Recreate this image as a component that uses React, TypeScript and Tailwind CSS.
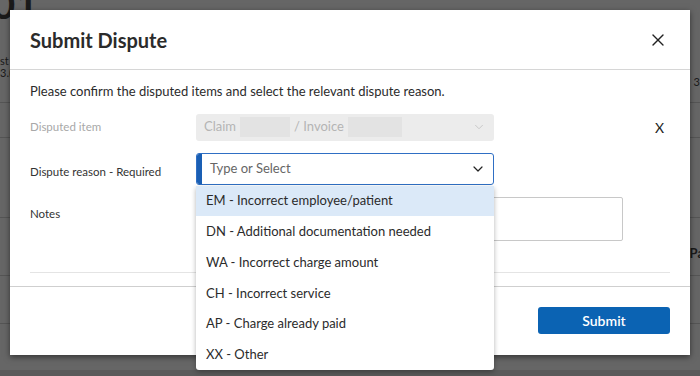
import { ChevronDown, X } from "lucide-react";

const reasons = [
  "EM - Incorrect employee/patient",
  "DN - Additional documentation needed",
  "WA - Incorrect charge amount",
  "CH - Incorrect service",
  "AP - Charge already paid",
  "XX - Other",
];

export default function App() {
  return (
    <div className="relative h-[376px] w-[700px] overflow-hidden bg-[#666666] font-['Lato',sans-serif] text-[#2b2b2b]">
      {/* page behind the overlay */}
      <div className="absolute inset-0 text-[#1a1a1a]">
        <div className="absolute left-[-8px] top-[-16px] text-[40px] font-bold leading-none">01</div>
        <div className="absolute left-0 top-[55px] text-[11px] leading-[12px]">st<br />3.(</div>
        <div className="absolute right-0 top-[74px] text-[11px]">3</div>
        <div className="absolute right-[-4px] top-[244px] text-[13px] font-bold">Pa</div>
        <div className="absolute left-0 right-0 top-[102px] h-px bg-[#555]" />
        <div className="absolute left-0 right-0 top-[137px] h-px bg-[#555]" />
        <div className="absolute left-0 right-0 top-[217px] h-px bg-[#555]" />
        <div className="absolute left-0 right-0 top-[275px] h-px bg-[#555]" />
        <div className="absolute left-0 right-0 top-[323px] h-px bg-[#555]" />
        <div className="absolute left-0 right-0 top-[370px] h-[6px] bg-[#5a5a5a]" />
      </div>

      {/* modal */}
      <div className="absolute left-[10px] top-[10px] w-[680px] bg-white shadow-[0_2px_6px_rgba(0,0,0,0.5)]">
        <div className="flex h-[60px] items-center justify-between border-b border-[#d6d6d6] pl-[20px] pr-[22px]">
          <h2 className="text-[20px] font-bold text-[#2b2b2b]">Submit Dispute</h2>
          <X className="h-[20px] w-[20px] text-[#222]" strokeWidth={1.6} />
        </div>

        <div className="px-[20px] pt-[12px]">
          <p className="text-[13px]">Please confirm the disputed items and select the relevant dispute reason.</p>

          <div className="mt-[12px] flex items-center">
            <div className="w-[166px] text-[11.5px] text-[#a8a8a8]">Disputed item</div>
            <div className="flex h-[27px] w-[298px] items-center justify-between rounded-[3px] bg-[#ececec] pl-[8px] pr-[8px] text-[13px] text-[#b4b4b4]">
              <div className="flex items-center">
                <span>Claim</span>
                <span className="mx-[4px] h-[20px] w-[50px] bg-[#e3e3e3]" />
                <span>/ Invoice</span>
                <span className="ml-[4px] h-[20px] w-[54px] bg-[#e3e3e3]" />
              </div>
              <ChevronDown className="h-[14px] w-[14px] text-[#c4c4c4]" strokeWidth={1.5} />
            </div>
            <div className="ml-auto mr-[6px] text-[14px] text-[#222]">X</div>
          </div>

          <div className="mt-[12px] flex items-start">
            <div className="w-[166px] pt-[10px] text-[11.5px] text-[#333]">Dispute reason - Required</div>
            <div className="relative z-10 w-[298px]">
              <div className="flex h-[32px] items-center justify-between overflow-hidden rounded-[3px] border border-[#2f6fc4] pr-[7px] text-[13px] text-[#666]">
                <div className="flex h-full items-center">
                  <span className="mr-[8px] h-full w-[5px] bg-[#1a5fb4]" />
                  <span>Type or Select</span>
                </div>
                <ChevronDown className="h-[16px] w-[16px] text-[#222]" strokeWidth={1.8} />
              </div>
              <ul className="absolute left-0 top-[33px] w-[298px] rounded-b-[3px] bg-white shadow-[0_2px_5px_rgba(0,0,0,0.3)]">
                {reasons.map((r, i) => (
                  <li
                    key={r}
                    className={`flex h-[30.8px] items-center pl-[10px] text-[13px] text-[#2b2b2b] ${i === 0 ? "bg-[#dbe9f8]" : ""}`}
                  >
                    {r}
                  </li>
                ))}
              </ul>
            </div>
          </div>

          <div className="mt-[12px] flex items-start">
            <div className="w-[166px] pt-[8px] text-[11.5px] text-[#333]">Notes</div>
            <div className="h-[44px] w-[427px] rounded-[2px] border border-[#c8c8c8]" />
          </div>

          <div className="mt-[31px] h-px bg-[#e4e4e4]" />
        </div>

        <div className="mt-[13px] flex justify-end border-t border-[#cfcfcf] px-[20px] pb-[21px] pt-[20px]">
          <button className="h-[27px] w-[132px] rounded-[3px] bg-[#0b63b3] text-[14px] font-semibold text-white">
            Submit
          </button>
        </div>
      </div>
    </div>
  );
}
